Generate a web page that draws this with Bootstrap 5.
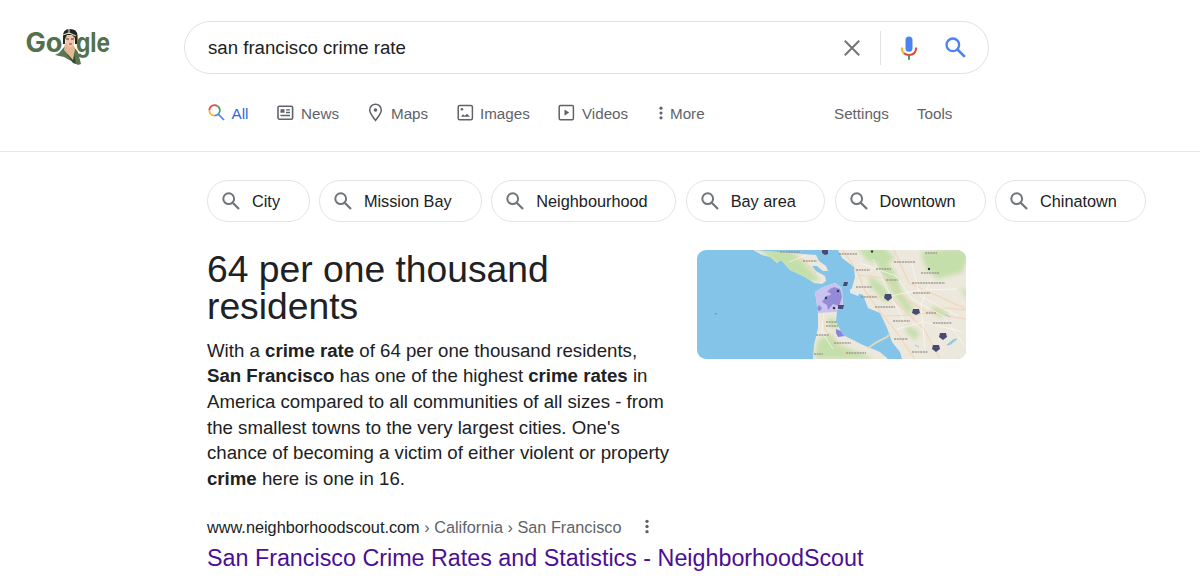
<!DOCTYPE html>
<html lang="en">
<head>
<meta charset="utf-8">
<meta name="viewport" content="width=device-width, initial-scale=1">
<title>san francisco crime rate - Google Search</title>
<link href="https://cdn.jsdelivr.net/npm/bootstrap@5.3.0/dist/css/bootstrap.min.css" rel="stylesheet">
<style>
body{font-family:"Liberation Sans",Arial,sans-serif;color:#202124;background:#fff;overflow:hidden;height:585px}
a{text-decoration:none;color:inherit}
svg{display:block;flex:none}
.site-head{height:152px;border-bottom:1px solid #e4e6e9}
.logo-link{width:184px;padding:21px 0 0 20px}
.search-pill{width:805px;height:53px;margin-top:21px;border:1px solid #dfe1e5;border-radius:27px;padding-left:23px}
.search-pill input{font-size:18.65px;color:#202124;background:none;outline:0;width:635px;height:44px;padding:0}
.divider{width:1px;height:34px;background:#dfe1e5;margin-left:19px}
.tabs{padding:27px 0 0 208px;font-size:15.2px;color:#5f6368;height:51px}
.tabs a{height:24px;line-height:25px;white-space:nowrap}
.tab-on{color:#2a6be0}
.chips{padding:28px 0 0 207px;gap:9.4px}
.chip{height:42px;border:1px solid #e2e4e8;border-radius:21px;padding-left:14px;font-size:16.3px;line-height:40px;white-space:nowrap}
.chip svg{margin-right:12px}
.answer{padding:28px 0 0 207px}
.answer-text{width:490px}
h1{font-size:37.25px;line-height:37.3px;margin:0;padding:1px 0 12px;font-weight:400;width:400px}
.answer p{font-size:18.65px;line-height:25.65px;margin:0;white-space:nowrap}
.map-thumb{width:269px;height:109px;border-radius:9px;overflow:hidden}
.result{padding:23px 0 0 207px}
.crumbs{font-size:16.3px;line-height:24px;color:#5f6368}
.crumbs b{font-weight:400;color:#202124}
h2{font-size:23.3px;line-height:30px;margin:4px 0 0;color:#4b0f94;font-weight:400}
</style>
</head>
<body>
<svg width="0" height="0" class="position-absolute"><defs>
<symbol id="glass" viewBox="0 0 18 18"><circle cx="6.7" cy="6.7" r="5.4" fill="none" stroke="currentColor" stroke-width="2"/><path d="M10.7 10.7 17 17" stroke="currentColor" stroke-width="2.2"/></symbol>
<symbol id="dots" viewBox="0 0 4 16"><g fill="currentColor"><circle cx="2" cy="2.5" r="1.8"/><circle cx="2" cy="8" r="1.8"/><circle cx="2" cy="13.5" r="1.8"/></g></symbol>
</defs></svg>
<header class="site-head">
 <div class="d-flex">
  <a class="logo-link" href="#" aria-label="Google">
   <svg width="96" height="50" viewBox="0 0 96 50">
    <g fill="#53714b" font-family="Inter" font-weight="700" font-size="26.5"><text x="5.5" y="31" textLength="37" lengthAdjust="spacingAndGlyphs">Go</text><text x="56" y="31" textLength="34" lengthAdjust="spacingAndGlyphs">gle</text></g>
    <path d="m45 25-6 7-4 2 9 2 14 8 3-1-3-12-4-5z" fill="#597650"/><path d="m47 33 6 9 3 1-2-12z" fill="#344c34"/>
    <path d="m45 22-1 7 9 10 2-11-2-5z" fill="#e5b894"/>
    <path d="M44.500 14q1-4 5-4 6 0 5.500 7l-1 7-4 3-4-4z" fill="#efc6a8"/>
    <path d="M43 17q-1-9 7-9 7 0 7.500 6 .5 4-.5 9l-2 0 0-6-3-3-5 0-2 4 0 5-2 0z" fill="#222522"/>
    <path d="m43 14 6-2 7 3M49 8l0 5" fill="none" stroke="#d4d3bd" stroke-width="1.2"/><path d="m46 18 3 0m2 0 3 0" stroke="#52392f"/><path d="m49 23 3 0" stroke="#bd4a3d" stroke-width="1.2"/>
   </svg></a>
  <form class="search-pill d-flex align-items-center">
   <input class="border-0" value="san francisco crime rate" aria-label="Search">
   <svg width="18" height="18" viewBox="0 0 18 18"><path d="m1.800 1.800 14.400 14.400m0-14.400L1.800 16.200" stroke="#70757a" stroke-width="2"/></svg>
   <span class="divider"></span>
   <svg width="28" height="28" viewBox="0 0 28 28" style="margin-left:14px"><rect x="10.5" y="2.5" width="7" height="15.3" rx="3.5" fill="#4c83ee"/><g fill="none" stroke-width="2"><path d="M6.8 13.5q0 4 2.4 6" stroke="#f4b52c"/><path d="M9 19.3Q11 21 14 21q7 0 7.2-7.5" stroke="#dc4b3e"/><path d="M14 21.5v4.3" stroke="#36a354"/></g></svg>
   <svg width="21" height="21" viewBox="0 0 18 18" style="margin:-1px 0 0 22px;color:#4c83ee"><use href="#glass"/></svg>
  </form>
 </div>
 <nav class="tabs d-flex">
  <a class="tab-on d-flex align-items-center" href="#" style="width:69px"><svg width="17" height="17" viewBox="0 0 17 17" style="margin:-1px 6.500px 0 0"><g fill="none" stroke-width="1.7"><path d="M1.300 6.500A5.300 5.300 0 0 1 9.500 2" stroke="#e24c3e"/><path d="M9.500 2a5.300 5.300 0 0 1 .8 8.200" stroke="#36a354"/><path d="M1.300 6.400a5.300 5.300 0 0 0 5.300 5.300" stroke="#f4b52c"/><path d="M6.500 11.700a5.300 5.300 0 0 0 3.800-1.500l5.700 5.800" stroke="#4c83ee"/></g></svg>All</a>
  <a class="d-flex align-items-center" href="#" style="width:91px"><svg width="17" height="16" viewBox="0 0 17 16" style="margin-right:7px"><rect x="1" y="1.2" width="14.600" height="13" rx="1.4" fill="none" stroke="currentColor" stroke-width="1.6"/><path d="M3.500 4.300h4v3.500h-4zM9 4.200h4v1.400H9zM9 6.800h4v1.400H9zM3.500 9.800H13v1.400H3.500z" fill="currentColor"/></svg>News</a>
  <a class="d-flex align-items-center" href="#" style="width:89px"><svg width="16" height="19" viewBox="0 0 16 19" style="margin:-2px 7px 0 0"><path d="M7.500 17.400C5 13.800 1.700 10.500 1.700 7a5.800 5.800 0 0 1 11.600 0c0 3.500-3.300 6.800-5.800 10.400z" fill="none" stroke="currentColor" stroke-width="1.5"/><circle cx="7.500" cy="7" r="1.800" fill="currentColor"/></svg>Maps</a>
  <a class="d-flex align-items-center" href="#" style="width:101px"><svg width="17" height="17" viewBox="0 0 17 17" style="margin:-1px 6px 0 0"><rect x="1.200" y="1.500" width="14.200" height="14.200" rx="1.500" fill="none" stroke="currentColor" stroke-width="1.500"/><path d="m4 12.800 2-2.500 1.800 1.500 2.200-2 3 3z" fill="currentColor"/><circle cx="5" cy="5.200" r="1.300" fill="currentColor"/></svg>Images</a>
  <a class="d-flex align-items-center" href="#" style="width:101px"><svg width="17" height="17" viewBox="0 0 17 17" style="margin:-1px 7px 0 0"><rect x="1.200" y="1.500" width="14.200" height="14.200" rx="1.200" fill="none" stroke="currentColor" stroke-width="1.500"/><path d="m6.500 5.500 4.700 3.100-4.700 3.100z" fill="currentColor"/></svg>Videos</a>
  <a class="d-flex align-items-center" href="#" style="width:175px"><svg width="4" height="14" style="margin-right:7px"><use href="#dots"/></svg>More</a>
  <a href="#" style="width:83px">Settings</a><a href="#">Tools</a>
 </nav>
</header>
<main>
 <nav class="chips d-flex">
  <a class="chip d-flex align-items-center" href="#" style="width:102.500px"><svg width="18" height="18" color="#70757a"><use href="#glass"/></svg>City</a>
  <a class="chip d-flex align-items-center" href="#" style="width:163px"><svg width="18" height="18" color="#70757a"><use href="#glass"/></svg>Mission Bay</a>
  <a class="chip d-flex align-items-center" href="#" style="width:185px"><svg width="18" height="18" color="#70757a"><use href="#glass"/></svg>Neighbourhood</a>
  <a class="chip d-flex align-items-center" href="#" style="width:139.500px"><svg width="18" height="18" color="#70757a"><use href="#glass"/></svg>Bay area</a>
  <a class="chip d-flex align-items-center" href="#" style="width:151px"><svg width="18" height="18" color="#70757a"><use href="#glass"/></svg>Downtown</a>
  <a class="chip d-flex align-items-center" href="#" style="width:151px"><svg width="18" height="18" color="#70757a"><use href="#glass"/></svg>Chinatown</a>
 </nav>
 <section class="answer d-flex">
  <div class="answer-text">
   <h1>64 per one thousand residents</h1>
   <p>With a <strong>crime rate</strong> of 64 per one thousand residents,<br><strong>San Francisco</strong> has one of the highest <strong>crime rates</strong> in<br>America compared to all communities of all sizes - from<br>the smallest towns to the very largest cities. One's<br>chance of becoming a victim of either violent or property<br><strong>crime</strong> here is one in 16.</p>
  </div>
  <div class="map-thumb">
   <svg width="269" height="109" viewBox="0 0 269 109" role="img" aria-label="Crime map of the San Francisco Bay Area">
    <defs><filter id="soft" x="-10%" y="-10%" width="120%" height="120%"><feGaussianBlur stdDeviation="2.2"/></filter><filter id="fine"><feGaussianBlur stdDeviation=".7"/></filter>
    <clipPath id="land"><path d="M56 0l9 5 8 2 7 6 4-3 9 10 15 7 9 6 8 1 4-3-1-5-9-5-4-5 5 0 6 5 5 0-2-5-7-5-3-6zM141 0l4 8 12 9 1 10-3 11-2 2 13 5 5 13 12 5 7 15 5 14 8 10 2 7h70V0zM118 42l8-5 12-4 7 5 1 20-6 2-1 12 7 13 20 10 17 7 8 7h-75l1-14 4-17V63z"/></clipPath></defs>
    <path fill="#84c4e8" d="M0 0h269v109H0z"/>
    <g filter="url(#fine)"><g clip-path="url(#land)">
     <path fill="#ede8dd" d="M0 0h269v109H0z"/>
     <g fill="#c5dfab" filter="url(#soft)"><path d="M60-4h30l20 20 14 14-14 2-28-14zM160-4h26l12 12-10 8-18-5zM183 9l14 11 9 24 11 15-6 5-15-20-9-17-7-10zM172 25l14 10 9 15-7 2-15-16zM224 2l35-4 14 4-8 21-25 6-12-12zM130 67l8 2 3 11-8-3zM120 91l14-8 9 12 35 14h-60zM211 75l12 8-5 7-10-9zM236 56l15 6-6 6-12-7zM262 37l10 5v9z"/></g>
     <g fill="none" stroke="#f4cfad" stroke-width="1.1" opacity=".8"><path d="M90 1l15 8 14 14M125 62l3 17 13 17 14 13M146 0l15 23 7 18 13 18 20 25 18 27M161 25l25 3 22 21 24 14 37 6M171 45l26 5 30 29 16 30M185 66l35-1 29-7 20 2M197 0l15 33 31 14 26 12"/></g>
     <g fill="none" stroke="#fffaf1" stroke-width="1" opacity=".65"><path d="M92 12l18-7M127 60l-2 22 11 17M163 13l36 13 16 23 31 17 21 29M176 9l18 38 15 27M214 11l9 35 38 20M185 48l37-8 39-1M200 79l27-7 39 10M234 29l-10 26 4 43"/></g>
     <path d="M118 42l8-5 12-4 7 5 1 20-7 4-20 1z" fill="#cac3ef"/><path d="M119 60l3-5 3 3-2 3zM125 52l4-6 5-1-2-5 5-3 6 2 2 8-3 9-6-2-5 6-1-5zM130 42l4-4 3 2-3 3z" fill="#938bd7"/><path d="M139 79l5 2 4 5-7 1-2-4z" fill="#8585df"/>
    </g>
    <path d="M171 98l9-6 10-5 2-2" fill="none" stroke="#ddd9bd" stroke-width="2"/><path d="M153 39l10 4-2 3-8-3z" fill="#e2e9ee"/><path d="M250 95l6-5 4-1-6 5zM248 64l5 3M218 95l4 2" stroke="#90cbd9" fill="#90cbd9"/>
    <g fill="none" stroke="#989087" stroke-width="2" opacity=".65"><path stroke-dasharray="2 .7" d="M83 2h20M106 11h14M142 4h18M197 12h21M159 20h14M179 19h15M189 30h12M215 33h33M216 43h17M159 37h16M164 47h16M178 57h20M229 63h10M196 71h17M236 73h19M197 89h14M137 93h17M149 103h20M215 102h16M228 3h12M224 23h18M117 104h9M119 85h13M129 72h11M129 76h12"/></g>
    <g fill="#464c72"><path d="m188 44 6 0 1 4-4 3-4-3zM216 59h6l1 4-4 2-4-2zM243 83h6l1 4-4 3-4-3zM236 95h6l1 4-4 3-4-3zM125 0h6v4l-3 1-3-2zM147 32h4l-1 4h-4zM141 55h6l-1 4-5 0z"/></g>
    <g fill="#303b43"><circle cx="129" cy="48" r="1.2"/><circle cx="141" cy="41" r="1.3"/><circle cx="137" cy="58" r="1.3"/><circle cx="175" cy="1.500" r="1.2"/><circle cx="232" cy="19" r="1.2"/><path d="M18 63h1.500v1.500H18z" fill="#688da9"/></g>
    </g>
   </svg>
  </div>
 </section>
 <section class="result">
  <div class="crumbs d-flex align-items-center"><span><b>www.neighborhoodscout.com</b> › California › San Francisco</span><svg width="4" height="15" style="margin-left:24px"><use href="#dots"/></svg></div>
  <h2><a href="#">San Francisco Crime Rates and Statistics - NeighborhoodScout</a></h2>
 </section>
</main>
<script src="https://cdn.jsdelivr.net/npm/bootstrap@5.3.0/dist/js/bootstrap.bundle.min.js"></script>
</body>
</html>
